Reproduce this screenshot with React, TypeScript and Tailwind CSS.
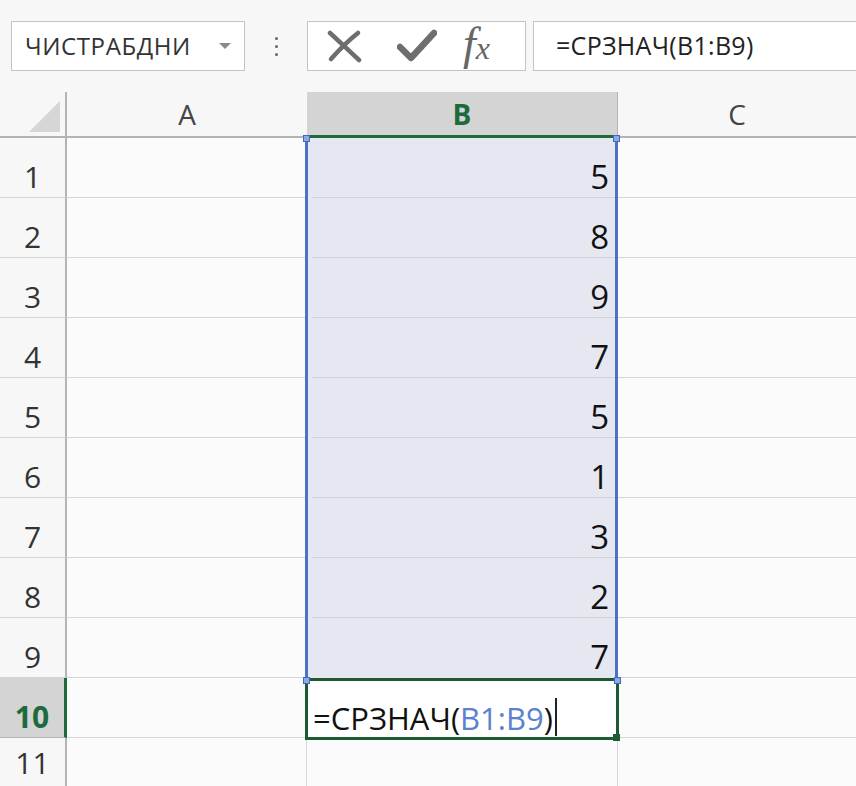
import React from "react";

const values = [5, 8, 9, 7, 5, 1, 3, 2, 7];

function Handle({ className }: { className: string }) {
  return <div className={`absolute h-[7px] w-[7px] border border-[#3f6ac4] bg-[#8fa9e0] ${className}`} />;
}

export default function App() {
  return (
    <div className="h-[786px] w-[856px] overflow-hidden bg-[#f7f7f7] font-['Open_Sans',sans-serif] text-[#222]">
      {/* formula bar */}
      <div className="flex h-[92px] items-start pt-[21px]">
        <div className="ml-[11px] flex h-[50px] w-[234px] items-center justify-between border border-[#c4c4c4] bg-white pl-[13px] pr-[12px]">
          <span className="text-[24px] tracking-[0.6px] text-[#333]">ЧИСТРАБДНИ</span>
          <svg width="14" height="8" viewBox="0 0 14 8">
            <path d="M1 1 L13 1 L7 7 Z" fill="#8a8a8a" />
          </svg>
        </div>
        <div className="flex h-[50px] w-[62px] flex-col items-center justify-center gap-[5px]">
          <span className="h-[3px] w-[3px] rounded-full bg-[#666]" />
          <span className="h-[3px] w-[3px] rounded-full bg-[#666]" />
          <span className="h-[3px] w-[3px] rounded-full bg-[#666]" />
        </div>
        <div className="flex h-[50px] w-[219px] items-center border border-[#c4c4c4] bg-white">
          <svg className="ml-[19px]" width="36" height="34" viewBox="0 0 36 34">
            <path d="M3 4 C12 12 22 22 32 31" stroke="#6e6e6e" strokeWidth="4.5" strokeLinecap="round" fill="none" />
            <path d="M31 4 C22 11 12 21 4 30" stroke="#6e6e6e" strokeWidth="4.5" strokeLinecap="round" fill="none" />
          </svg>
          <svg className="ml-[34px]" width="40" height="34" viewBox="0 0 40 34">
            <path d="M3 18 L14 29 L37 4" stroke="#6e6e6e" strokeWidth="6.5" strokeLinecap="round" strokeLinejoin="round" fill="none" />
          </svg>
          <span className="ml-[26px] mt-[-4px] flex items-baseline font-['Liberation_Serif',serif] italic leading-none text-[#666]">
            <span className="text-[46px]">f</span>
            <span className="text-[32px]">x</span>
          </span>
        </div>
        <div className="ml-[7px] flex h-[50px] flex-1 items-center border border-r-0 border-[#c4c4c4] bg-white pl-[22px]">
          <span className="text-[25px] tracking-[0.3px] text-[#222]">=СРЗНАЧ(B1:B9)</span>
        </div>
      </div>

      {/* column headers */}
      <div className="flex h-[46px]">
        <div className="relative w-[67px] border-r-2 border-b-2 border-[#b4b4b4]">
          <svg className="absolute left-[29px] top-[9px]" width="31" height="31" viewBox="0 0 31 31">
            <path d="M31 0 L31 31 L0 31 Z" fill="#d6d6d6" />
          </svg>
        </div>
        <div className="flex w-[240px] items-center justify-center border-b-2 border-[#b4b4b4] text-[28px] text-[#444]">A</div>
        <div className="flex w-[310px] items-center justify-center border-b-[3px] border-[#1d6b3c] bg-[#d4d4d4] text-[28px] font-bold text-[#1d6b3c]">
          B
        </div>
        <div className="flex flex-1 items-center justify-center border-b-2 border-l border-[#b4b4b4] text-[28px] text-[#444]">C</div>
      </div>

      {/* rows */}
      {values.map((v, i) => (
        <div key={i} className="flex h-[60px]">
          <div className="flex w-[67px] items-end justify-center border-r-2 border-b border-r-[#b4b4b4] border-b-[#d6d6d6] pb-[5px] text-[30px] leading-none text-[#333]">
            {i + 1}
          </div>
          <div className="w-[238px] border-b border-[#d6d6d6] bg-[#fbfbfb]" />
          <div className="relative flex w-[313px] items-end justify-end border-x-[3px] border-[#4a72c8] bg-[#e5e8f1] pb-[5px] pr-[6px] text-[33px] leading-none text-[#111]">
            {i < 8 && <div className="absolute bottom-0 left-[4px] right-0 h-px bg-[#cfd2d9]" />}
            <span className="relative">{v}</span>
            {i === 0 && (
              <>
                <Handle className="left-[-5px] top-[-3px]" />
                <Handle className="right-[-5px] top-[-3px]" />
              </>
            )}
          </div>
          <div className="flex-1 border-b border-[#d6d6d6] bg-[#fbfbfb]" />
        </div>
      ))}

      {/* row 10 */}
      <div className="flex h-[60px]">
        <div className="flex w-[67px] items-end justify-center border-r-[3px] border-b border-r-[#1d6b3c] border-b-[#b4b4b4] bg-[#d4d4d4] pb-[5px] text-[30px] font-bold leading-none text-[#1d6b3c]">
          10
        </div>
        <div className="w-[238px] border-b border-[#d6d6d6] bg-[#fbfbfb]" />
        <div className="relative z-10 -mb-[2px] flex w-[314px] items-end border-[3px] border-[#1d5a34] bg-white pb-[3px] pl-[5px] text-[31px] leading-none text-[#111]">
          <span>=СРЗНАЧ(</span>
          <span className="text-[#5b82cf]">B1:B9</span>
          <span>)</span>
          <span className="mb-[-2px] ml-[2px] h-[38px] w-[2px] bg-[#222]" />
          <Handle className="left-[-5px] top-[-4px]" />
          <Handle className="right-[-5px] top-[-4px]" />
          <div className="absolute bottom-[-4px] right-[-4px] h-[7px] w-[7px] bg-[#1d5a34]" />
        </div>
        <div className="flex-1 border-b border-[#d6d6d6] bg-[#fbfbfb]" />
      </div>

      {/* row 11 */}
      <div className="flex h-[60px]">
        <div className="flex w-[67px] items-end justify-center border-r-2 border-[#b4b4b4] pb-[20px] text-[30px] leading-none text-[#333]">11</div>
        <div className="w-[240px] border-r border-[#d6d6d6] bg-[#fbfbfb]" />
        <div className="w-[311px] border-r border-[#d6d6d6] bg-[#fbfbfb]" />
        <div className="flex-1 bg-[#fbfbfb]" />
      </div>
    </div>
  );
}
